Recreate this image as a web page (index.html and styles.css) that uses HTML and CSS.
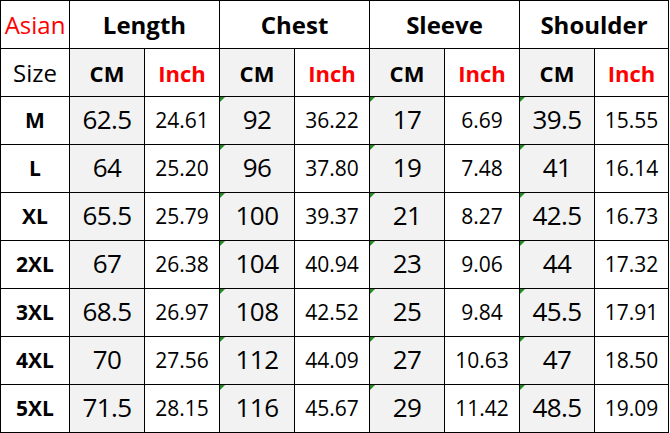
FILE: index.html
```html
<!DOCTYPE html>
<html>
<head>
<meta charset="utf-8">
<link rel="stylesheet" href="styles.css">
</head>
<body>
<div class="chart">
  <div class="c red reg hdr">Asian</div>
  <div class="c bold hdr span2">Length</div>
  <div class="c bold hdr span2">Chest</div>
  <div class="c bold hdr span2">Sleeve</div>
  <div class="c bold hdr span2">Shoulder</div>

  <div class="c reg hdr">Size</div>
  <div class="c gray bold sub">CM</div><div class="c red bold sub">Inch</div>
  <div class="c gray bold sub">CM</div><div class="c red bold sub">Inch</div>
  <div class="c gray bold sub">CM</div><div class="c red bold sub">Inch</div>
  <div class="c gray bold sub">CM</div><div class="c red bold sub">Inch</div>

  <div class="c size">M</div>
  <div class="c gray cm">62.5</div><div class="c in">24.61</div>
  <div class="c gray cm tri">92</div><div class="c in">36.22</div>
  <div class="c gray cm tri">17</div><div class="c in">6.69</div>
  <div class="c gray cm tri">39.5</div><div class="c in">15.55</div>

  <div class="c size">L</div>
  <div class="c gray cm">64</div><div class="c in">25.20</div>
  <div class="c gray cm tri">96</div><div class="c in">37.80</div>
  <div class="c gray cm tri">19</div><div class="c in">7.48</div>
  <div class="c gray cm tri">41</div><div class="c in">16.14</div>

  <div class="c size">XL</div>
  <div class="c gray cm">65.5</div><div class="c in">25.79</div>
  <div class="c gray cm tri">100</div><div class="c in">39.37</div>
  <div class="c gray cm tri">21</div><div class="c in">8.27</div>
  <div class="c gray cm tri">42.5</div><div class="c in">16.73</div>

  <div class="c size">2XL</div>
  <div class="c gray cm">67</div><div class="c in">26.38</div>
  <div class="c gray cm tri">104</div><div class="c in">40.94</div>
  <div class="c gray cm tri">23</div><div class="c in">9.06</div>
  <div class="c gray cm tri">44</div><div class="c in">17.32</div>

  <div class="c size">3XL</div>
  <div class="c gray cm">68.5</div><div class="c in">26.97</div>
  <div class="c gray cm tri">108</div><div class="c in">42.52</div>
  <div class="c gray cm tri">25</div><div class="c in">9.84</div>
  <div class="c gray cm tri">45.5</div><div class="c in">17.91</div>

  <div class="c size">4XL</div>
  <div class="c gray cm">70</div><div class="c in">27.56</div>
  <div class="c gray cm tri">112</div><div class="c in">44.09</div>
  <div class="c gray cm tri">27</div><div class="c in">10.63</div>
  <div class="c gray cm tri">47</div><div class="c in">18.50</div>

  <div class="c size">5XL</div>
  <div class="c gray cm">71.5</div><div class="c in">28.15</div>
  <div class="c gray cm tri">116</div><div class="c in">45.67</div>
  <div class="c gray cm tri">29</div><div class="c in">11.42</div>
  <div class="c gray cm tri">48.5</div><div class="c in">19.09</div>
</div>
</body>
</html>
```
FILE: styles.css
```css
html, body {
  margin: 0;
  padding: 0;
  background: #fff;
}
.chart {
  display: grid;
  grid-template-columns: 68px repeat(7, 74px) 73px;
  grid-auto-rows: 47px;
  gap: 1px;
  padding: 1px;
  background: #000;
  width: 667px;
  font-family: "Open Sans", "Noto Sans", sans-serif;
  color: #000;
}
.c {
  background: #fff;
  display: flex;
  align-items: center;
  justify-content: center;
  position: relative;
  line-height: 1;
}
.span2 { grid-column: span 2; }
.gray { background: #f2f2f2; }
.red { color: #ff0000; }
.bold { font-weight: 700; }
.reg { font-weight: 400; }
.hdr { font-size: 24px; }
.sub { font-size: 22px; }
.size { font-size: 21px; font-weight: 700; }
.cm { font-size: 26px; letter-spacing: -0.6px; padding-bottom: 3px; }
.in { font-size: 21px; padding-bottom: 1px; }
.tri::before {
  content: "";
  position: absolute;
  top: 0;
  left: 0;
  border-top: 5px solid #1f8f1f;
  border-right: 5px solid transparent;
}
```
